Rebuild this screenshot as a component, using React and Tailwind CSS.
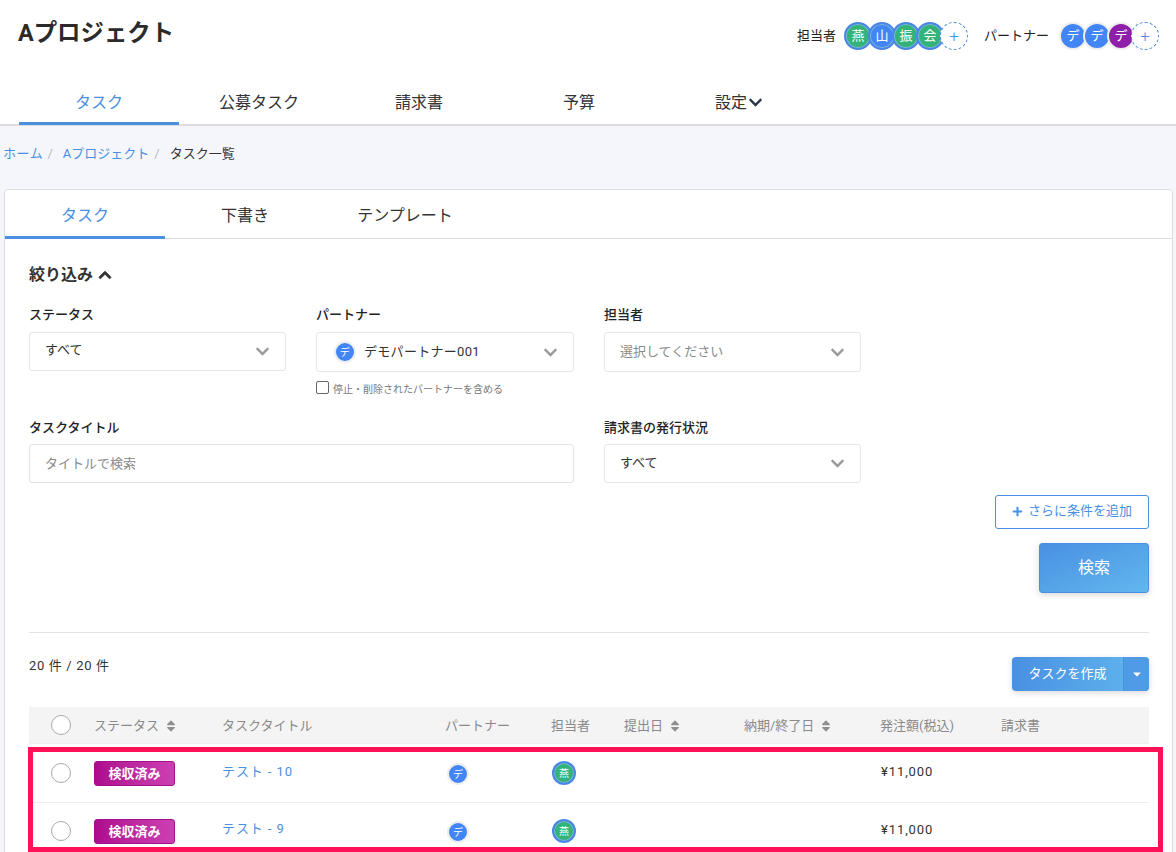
import React from "react";
import { FaChevronDown, FaChevronUp, FaPlus, FaSort, FaCaretDown } from "react-icons/fa";

const font = { fontFamily: '"Roboto", "Noto Sans CJK JP", sans-serif' };

function Staff({ c, small, blue }) {
  return (
    <span className={`flex shrink-0 items-center justify-center rounded-full border-2 border-[#4a86e8] text-white shadow-[inset_0_0_0_1px_#7fb6d8] ${blue ? "bg-[#4285f4]" : "bg-[#33b377]"} ${small ? "h-6 w-6 text-[10px]" : "h-7 w-7 text-[13px]"}`}>
      {c}
    </span>
  );
}

function Partner({ c, purple, small }) {
  return (
    <span className={`flex shrink-0 items-center justify-center rounded-full border-2 border-[#eeeeee] text-white ${purple ? "bg-[#8e1fa8]" : "bg-[#4285f4]"} ${small ? "h-[22px] w-[22px] text-[10px]" : "h-7 w-7 text-[13px]"}`}>
      {c}
    </span>
  );
}

function AddCircle() {
  return (
    <span className="flex h-7 w-7 shrink-0 items-center justify-center rounded-full border border-dashed border-[#4a90e2] bg-white text-[17px] font-light leading-none text-[#4a90e2]">
      +
    </span>
  );
}

function Select({ children, h = "h-[40px]", pad = "pl-[15px]" }) {
  return (
    <div className={`flex items-center justify-between rounded-[3px] border border-[#e6e6e6] bg-white pr-[15px] ${h} ${pad}`}>
      {children}
      <FaChevronDown className="text-[15px] text-[#9a9a9a]" />
    </div>
  );
}

function Label({ children, mb = "mb-2" }) {
  return <div className={`h-[18px] text-[13px] font-medium leading-[18px] text-[#222] ${mb}`}>{children}</div>;
}

function Sortable({ children }) {
  return (
    <span className="flex items-center gap-[5px]">
      {children}
      <FaSort className="text-[14px] text-[#8f8f8f]" />
    </span>
  );
}

const cols = "grid grid-cols-[65px_128px_223px_106px_73px_120px_137px_121px_147px]";

function Radio({ className = "" }) {
  return <span className={`ml-[22px] block h-[20px] w-[20px] rounded-full border border-[#aaaaaa] bg-white ${className}`} />;
}

function Row({ title, last }) {
  return (
    <div className={`${cols} h-[58px] items-start pt-[16px] ${last ? "" : "border-b border-[#eeeeee]"}`}>
      <Radio className="mt-[2px]" />
      <span className="flex h-[25px] w-[81px] items-center justify-center rounded-[3px] border border-[#a50f8c] bg-gradient-to-r from-[#ae0a8e] to-[#cb3fb2] text-[13px] font-bold text-white">
        検収済み
      </span>
      <span className={`text-[13px] leading-[17px] tracking-[0.9px] text-[#4a90e2] ${last ? "mt-px" : "mt-[2px]"}`}>{title}</span>
      <span className="mt-[2px] pl-[2px]"><Partner c="デ" small /></span>
      <span className="pl-px"><Staff c="燕" small /></span>
      <span />
      <span />
      <span className="mt-[2px] text-[13px] leading-[17px] tracking-[0.9px] text-[#333]">¥11,000</span>
      <span />
    </div>
  );
}

export default function App() {
  const navs = ["公募タスク", "請求書", "予算"];
  return (
    <div style={font} className="h-[852px] overflow-hidden bg-[#f4f6fb] text-[#333]">
      <header className="h-[126px] border-b-2 border-[#dddddd] bg-white">
        <div className="flex h-[78px] items-start justify-between pl-[18px] pr-[17px]">
          <h1 className="mt-[17px] text-[23.4px] font-bold leading-8 text-[#2b2b2b]">Aプロジェクト</h1>
          <div className="mt-[22px] flex items-center text-[13px] text-[#222]">
            <span className="mr-2">担当者</span>
            <div className="flex [&>*+*]:-ml-1">
              <Staff c="燕" /><Staff c="山" blue /><Staff c="振" /><Staff c="会" /><AddCircle />
            </div>
            <span className="ml-4 mr-[10px]">パートナー</span>
            <div className="flex [&>*+*]:-ml-1">
              <Partner c="デ" /><Partner c="デ" /><Partner c="デ" purple /><AddCircle />
            </div>
          </div>
        </div>
        <nav className="flex pl-[19px] text-[16px] text-[#333]">
          <span className="relative flex h-[47px] w-40 items-center justify-center border-b-[3px] border-[#4a90e2] pt-[5px] text-[#4a90e2]">タスク</span>
          {navs.map((n) => (
            <span key={n} className="flex h-[47px] w-40 items-center justify-center pb-[3px] pt-[5px]">{n}</span>
          ))}
          <span className="flex h-[47px] w-40 items-center justify-center gap-px pb-[3px] pt-[5px]">
            設定<FaChevronDown className="text-[15px] text-[#2b3a4a]" />
          </span>
        </nav>
      </header>

      <div className="flex h-[63px] items-start pl-[3px] pt-[19px] text-[13px] leading-[18px]">
        <span className="tracking-[0.6px] text-[#4a90e2]">ホーム</span>
        <span className="ml-[4px] mr-[10px] text-[#bbbbbb]">/</span>
        <span className="text-[#4a90e2]">Aプロジェクト</span>
        <span className="ml-[5px] mr-[10px] text-[#bbbbbb]">/</span>
        <span className="text-[#333]">タスク一覧</span>
      </div>

      <section className="ml-1 mr-[3px] rounded-t-[4px] border border-[#dddddd] bg-white">
        <div className="flex h-[49px] border-b border-[#dddddd] text-[16px]">
          <span className="flex h-[49px] w-40 items-center justify-center border-b-[3px] border-[#4a90e2] pt-[5px] text-[#4a90e2]">タスク</span>
          <span className="flex h-[48px] w-40 items-center justify-center pt-[3px]">下書き</span>
          <span className="flex h-[48px] w-40 items-center justify-center pt-[3px]">テンプレート</span>
        </div>

        <div className="pl-6 pr-[23px]">
          <div className="mt-[27px] flex h-[18px] items-center gap-[5px] text-[16px] font-bold text-[#333]">
            絞り込み <FaChevronUp className="text-[14px]" strokeWidth={30} />
          </div>

          <div className="mt-[22px] grid grid-cols-[257px_258px_257px] gap-x-[30px]">
            <div className="h-[113px]">
              <Label>ステータス</Label>
              <Select h="h-[39px]"><span className="-mt-[3px] text-[13px]">すべて</span></Select>
            </div>
            <div className="h-[113px]">
              <Label>パートナー</Label>
              <Select pad="pl-[17px]">
                <span className="flex items-center gap-[8px] text-[13px] tracking-[0.3px]">
                  <Partner c="デ" small />デモパートナー001
                </span>
              </Select>
              <label className="mt-[8px] flex h-[18px] items-start text-[10px] leading-[18px] text-[#777]">
                <span className="mt-px mr-[4px] h-[13px] w-[13px] shrink-0 rounded-[2px] border border-[#666] bg-white" />
                <span className="mt-[1px]">停止・削除されたパートナーを含める</span>
              </label>
            </div>
            <div className="h-[113px]">
              <Label>担当者</Label>
              <Select><span className="text-[13px] text-[#8a8a8a]">選択してください</span></Select>
            </div>
            <div className="col-span-2">
              <Label mb="mb-[7px]">タスクタイトル</Label>
              <div className="flex h-[39px] items-center rounded-[3px] border border-[#dde3e8] bg-white pl-[15px] text-[13px] text-[#8a8a8a]">
                タイトルで検索
              </div>
            </div>
            <div>
              <Label mb="mb-[7px]">請求書の発行状況</Label>
              <Select h="h-[39px]"><span className="-mt-[2px] text-[13px]">すべて</span></Select>
            </div>
          </div>

          <div className="mt-3 flex justify-end">
            <button className="flex h-[34px] w-[154px] items-center justify-center gap-[5px] rounded-[3px] border border-[#4a90e2] bg-white pb-[2px] text-[13px] text-[#4a90e2]">
              <FaPlus className="text-[11px]" />さらに条件を追加
            </button>
          </div>
          <div className="mt-[14px] flex justify-end">
            <button className="h-[50px] w-[110px] rounded-[3px] border border-[#4a90e2] bg-gradient-to-br from-[#4a90e2] to-[#62b7ee] pb-px text-[16px] text-white shadow-[0_2px_6px_rgba(0,0,0,0.15)]">
              検索
            </button>
          </div>

          <hr className="mt-[39px] border-t border-[#e3e3e3]" />

          <div className="mt-[24px] flex items-start justify-between">
            <span className="mt-px text-[13px] leading-4 tracking-[0.65px] text-[#333]">20 件 / 20 件</span>
            <div className="flex h-[34px] w-[137px] overflow-hidden rounded-[4px] bg-gradient-to-r from-[#4a90e2] to-[#62b7ee] text-[13px] text-white shadow-[0_2px_6px_rgba(0,0,0,0.15)]">
              <span className="flex w-[111px] items-center justify-center">タスクを作成</span>
              <span className="flex flex-1 items-center justify-center border-l border-[#4a90e2] bg-[#4f9be6] text-[12px]"><FaCaretDown /></span>
            </div>
          </div>

          <div className={`${cols} mt-4 h-[37px] items-center border-b border-[#eeeeee] bg-[#f4f4f4] pt-[2px] text-[13px] text-[#8a8a8a]`}>
            <Radio className="-mt-[2px]" />
            <Sortable>ステータス</Sortable>
            <span>タスクタイトル</span>
            <span>パートナー</span>
            <span>担当者</span>
            <Sortable>提出日</Sortable>
            <Sortable>納期/終了日</Sortable>
            <span className="-ml-px">発注額(税込)</span>
            <span className="-ml-px">請求書</span>
          </div>

          <div className="relative">
            <div className="pt-px">
              <Row title="テスト - 10" />
              <Row title="テスト - 9" last />
            </div>
            <div className="pointer-events-none absolute -left-px top-[3px] h-[105px] w-[1135px] border-[5px] border-[#ff1158]" />
          </div>
        </div>
      </section>
    </div>
  );
}
